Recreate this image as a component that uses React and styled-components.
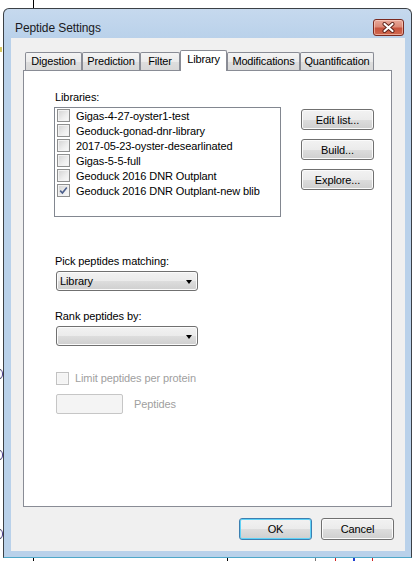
import styled, { createGlobalStyle } from 'styled-components';

const GlobalStyle = createGlobalStyle`
  html, body {
    margin: 0;
    padding: 0;
    background: #ffffff;
  }
  body {
    font-family: "Liberation Sans", Arial, sans-serif;
  }
`;

const libraries = [
  { name: 'Gigas-4-27-oyster1-test', checked: false },
  { name: 'Geoduck-gonad-dnr-library', checked: false },
  { name: '2017-05-23-oyster-desearlinated', checked: false },
  { name: 'Gigas-5-5-full', checked: false },
  { name: 'Geoduck 2016 DNR Outplant', checked: false },
  { name: 'Geoduck 2016 DNR Outplant-new blib', checked: true },
];

const tabs = [
  { label: 'Digestion', width: 57 },
  { label: 'Prediction', width: 58 },
  { label: 'Filter', width: 40 },
  { label: 'Library', width: 47, selected: true },
  { label: 'Modifications', width: 73 },
  { label: 'Quantification', width: 74 },
];

const Desktop = styled.div`
  position: relative;
  width: 413px;
  height: 561px;
  box-sizing: border-box;
  padding: 8px 0 0 3px;
  overflow: hidden;
  background: #ffffff;
`;

// scraps of the window behind the dialog
const Scrap = styled.span`
  position: absolute;
  left: ${(p) => p.x}px;
  top: ${(p) => p.y}px;
  width: ${(p) => p.w}px;
  height: ${(p) => p.h}px;
  background: ${(p) => p.color};
`;

const Crescent = styled.span`
  position: absolute;
  left: -4px;
  top: ${(p) => p.y}px;
  width: 5px;
  height: 8px;
  border: 1px solid #33334d;
  border-right-color: #4a3a8a;
  border-radius: 50%;
  background: #fff;
`;

const Window = styled.div`
  width: 409px;
  height: 550px;
  box-sizing: border-box;
  border: 1px solid #3b4046;
  border-bottom-color: #4fa7c8;
  border-radius: 6px 6px 0 0;
  background: linear-gradient(#c6d9ee, #b9d1ea 30px);
  padding: 0 6px 6px 7px;
  display: flex;
  flex-direction: column;
`;

const TitleBar = styled.div`
  height: 29px;
  box-sizing: border-box;
  padding: 8px 1px 0 4px;
  display: flex;
  align-items: center;
  justify-content: space-between;
`;

const Title = styled.span`
  font-size: 12px;
  color: #1a1a22;
  letter-spacing: -0.1px;
`;

const CloseButton = styled.div`
  width: 31px;
  height: 17px;
  box-sizing: border-box;
  border: 1px solid #7a2a20;
  border-radius: 3px;
  background: linear-gradient(#e9a99b 0%, #dc8a78 45%, #c7533e 55%, #d06a50 100%);
  box-shadow: inset 0 0 0 1px rgba(255, 220, 210, 0.55);
  display: flex;
  align-items: center;
  justify-content: center;
`;

const Client = styled.div`
  flex: 1;
  background: #f0f0f0;
  padding: 12px 13px 11px 12px;
  display: flex;
  flex-direction: column;
`;

const TabStrip = styled.div`
  height: 20px;
  padding-left: 2px;
  display: flex;
  align-items: flex-end;
`;

const Tab = styled.div`
  position: relative;
  z-index: ${(p) => (p.$selected ? 1 : 0)};
  width: ${(p) => p.$width}px;
  height: ${(p) => (p.$selected ? 21 : 18)}px;
  margin-bottom: ${(p) => (p.$selected ? -1 : 0)}px;
  box-sizing: border-box;
  border: 1px solid #898c95;
  border-bottom: none;
  border-radius: 2px 2px 0 0;
  background: ${(p) =>
    p.$selected ? '#ffffff' : 'linear-gradient(#f4f4f4 0%, #ebebeb 50%, #dedede 51%, #d8d8d8 100%)'};
  font-size: 11px;
  letter-spacing: -0.15px;
  color: #000;
  text-align: center;
  white-space: nowrap;
  line-height: 17px;
`;

const TabPanel = styled.div`
  height: 437px;
  box-sizing: border-box;
  border: 1px solid #898c95;
  background: #ffffff;
  padding: 20px 0 0 30px;
  display: flex;
  flex-direction: column;
`;

const LibraryRow = styled.div`
  display: flex;
`;

const LibraryColumn = styled.div`
  width: 227px;
  display: flex;
  flex-direction: column;
`;

const Label = styled.div`
  height: 13px;
  line-height: 13px;
  margin-left: 1px;
  margin-top: ${(p) => p.$top || 0}px;
  font-size: 11px;
  letter-spacing: -0.1px;
  color: ${(p) => (p.$disabled ? '#a0a0a0' : '#000')};
`;

const ListBox = styled.div`
  margin-top: 3px;
  height: 110px;
  box-sizing: border-box;
  border: 1px solid #828790;
  background: #fff;
`;

const ListItem = styled.div`
  height: 15px;
  padding-left: 2px;
  display: flex;
  align-items: center;
  font-size: 11px;
  letter-spacing: -0.1px;
  white-space: nowrap;
  color: #000;
`;

const CheckBox = styled.span`
  width: 13px;
  height: 13px;
  flex: none;
  box-sizing: border-box;
  border: 1px solid ${(p) => (p.$disabled ? '#c2c2c2' : '#8e8f8f')};
  background: ${(p) =>
    p.$disabled ? '#f4f4f4' : 'linear-gradient(135deg, #d2d2d2 0%, #eeeeee 60%, #fafafa 100%)'};
  box-shadow: inset 0 0 0 1px ${(p) => (p.$disabled ? '#f7f7f7' : '#f2f2f2')};
  margin-right: 6px;
  display: flex;
  align-items: center;
  justify-content: center;
`;

const SideButtons = styled.div`
  margin-left: 20px;
  padding-top: 18px;
  display: flex;
  flex-direction: column;
  gap: 9px;
`;

const Button = styled.button`
  width: ${(p) => p.$width || 73}px;
  height: ${(p) => p.$height || 21}px;
  box-sizing: border-box;
  padding: 0;
  border: 1px solid ${(p) => (p.$default ? '#3c7fb1' : '#707070')};
  border-radius: 3px;
  background: linear-gradient(#f2f2f2 0%, #ebebeb 50%, #dddddd 51%, #cfcfcf 100%);
  box-shadow: inset 0 0 0 1px ${(p) => (p.$default ? '#5fd2f7' : '#fbfbfb')};
  font-family: "Liberation Sans", Arial, sans-serif;
  font-size: 11px;
  letter-spacing: -0.1px;
  color: #000;
`;

const Combo = styled.div`
  width: 142px;
  height: 20px;
  margin: 3px 0 0 2px;
  box-sizing: border-box;
  border: 1px solid #707070;
  border-radius: 3px;
  background: linear-gradient(#f2f2f2 0%, #ebebeb 50%, #dddddd 51%, #cfcfcf 100%);
  box-shadow: inset 0 0 0 1px #fbfbfb;
  padding: 0 5px 0 3px;
  display: flex;
  align-items: center;
  justify-content: space-between;
  font-size: 11px;
  letter-spacing: -0.1px;
  color: #000;
`;

const Arrow = styled.span`
  width: 0;
  height: 0;
  border-left: 3.5px solid transparent;
  border-right: 3.5px solid transparent;
  border-top: 4px solid #000;
  margin-top: 1px;
`;

const CheckRow = styled.div`
  margin-top: ${(p) => p.$top}px;
  margin-left: 2px;
  display: flex;
  align-items: center;
  height: 14px;
  font-size: 11px;
  letter-spacing: -0.1px;
  color: #a0a0a0;
`;

const FieldRow = styled.div`
  margin-top: 9px;
  margin-left: 2px;
  display: flex;
  align-items: center;
  gap: 10px;
`;

const TextBox = styled.div`
  width: 67px;
  height: 20px;
  box-sizing: border-box;
  border: 1px solid #c6c6c6;
  border-radius: 2px;
  background: #f4f4f4;
`;

const DialogButtons = styled.div`
  margin-top: 11px;
  margin-right: -2px;
  display: flex;
  justify-content: flex-end;
  gap: 9px;
`;

const CheckMark = () => (
  <svg width="9" height="9" viewBox="0 0 9 9">
    <path d="M1.2 4.6 L3.4 7 L7.8 1.4" fill="none" stroke="#4c5f8c" strokeWidth="1.6" />
  </svg>
);

const CloseGlyph = () => (
  <svg width="13" height="11" viewBox="0 0 13 11">
    <path d="M2.5 2 L10.5 9 M10.5 2 L2.5 9" stroke="#5b2018" strokeWidth="4" strokeLinecap="round" />
    <path d="M2.5 2 L10.5 9 M10.5 2 L2.5 9" stroke="#ffffff" strokeWidth="2.2" strokeLinecap="round" />
  </svg>
);

const App = () => {
  return (
    <>
      <GlobalStyle />
      <Desktop>
        <Scrap x={33} y={0} w={1} h={8} color="#000" />
        <Scrap x={0} y={47} w={2} h={5} color="#d8c860" />
        <Crescent y={369} />
        <Crescent y={450} />
        <Crescent y={529} />
        <Scrap x={33} y={558} w={1} h={3} color="#000" />
        <Scrap x={227} y={558} w={1} h={3} color="#000" />
        <Scrap x={315} y={558} w={1} h={3} color="#777" />
        <Scrap x={335} y={558} w={1} h={3} color="#d02020" />
        <Scrap x={353} y={558} w={2} h={3} color="#2040d0" />
        <Scrap x={372} y={558} w={1} h={3} color="#d02020" />

        <Window>
          <TitleBar>
            <Title>Peptide Settings</Title>
            <CloseButton>
              <CloseGlyph />
            </CloseButton>
          </TitleBar>
          <Client>
            <TabStrip>
              {tabs.map((t) => (
                <Tab key={t.label} $width={t.width} $selected={t.selected}>
                  {t.label}
                </Tab>
              ))}
            </TabStrip>
            <TabPanel>
              <LibraryRow>
                <LibraryColumn>
                  <Label>Libraries:</Label>
                  <ListBox>
                    {libraries.map((lib) => (
                      <ListItem key={lib.name}>
                        <CheckBox>{lib.checked && <CheckMark />}</CheckBox>
                        {lib.name}
                      </ListItem>
                    ))}
                  </ListBox>
                </LibraryColumn>
                <SideButtons>
                  <Button>Edit list...</Button>
                  <Button>Build...</Button>
                  <Button>Explore...</Button>
                </SideButtons>
              </LibraryRow>

              <Label $top={38}>Pick peptides matching:</Label>
              <Combo>
                Library
                <Arrow />
              </Combo>

              <Label $top={19}>Rank peptides by:</Label>
              <Combo>
                <span />
                <Arrow />
              </Combo>

              <CheckRow $top={25}>
                <CheckBox $disabled />
                Limit peptides per protein
              </CheckRow>
              <FieldRow>
                <TextBox />
                <Label $disabled>Peptides</Label>
              </FieldRow>
            </TabPanel>
            <DialogButtons>
              <Button $default $height={22}>OK</Button>
              <Button $height={22}>Cancel</Button>
            </DialogButtons>
          </Client>
        </Window>
      </Desktop>
    </>
  );
};

export default App;
